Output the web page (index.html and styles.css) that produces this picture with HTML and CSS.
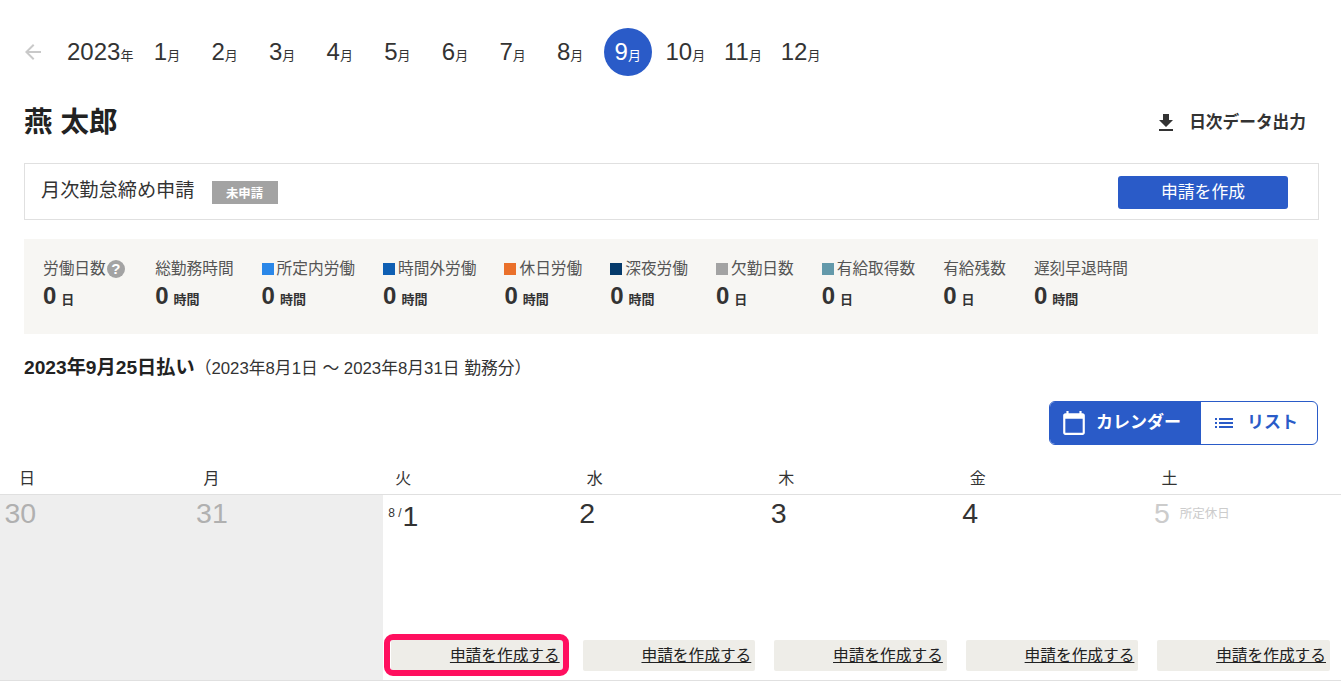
FILE: index.html
```html
<!DOCTYPE html>
<html lang="ja">
<head>
<meta charset="utf-8">
<title>勤怠</title>
<link rel="stylesheet" href="styles.css">
</head>
<body>
<div class="page">
  <nav class="months">
    <svg class="back" viewBox="0 0 24 24"><path d="M20 11H7.83l5.59-5.59L12 4l-8 8 8 8 1.41-1.41L7.83 13H20v-2z"/></svg>
    <div class="year">2023<small>年</small></div>
    <div class="month-list">
      <a class="month">1<small>月</small></a>
      <a class="month">2<small>月</small></a>
      <a class="month">3<small>月</small></a>
      <a class="month">4<small>月</small></a>
      <a class="month">5<small>月</small></a>
      <a class="month">6<small>月</small></a>
      <a class="month">7<small>月</small></a>
      <a class="month">8<small>月</small></a>
      <a class="month current">9<small>月</small></a>
      <a class="month">10<small>月</small></a>
      <a class="month">11<small>月</small></a>
      <a class="month">12<small>月</small></a>
    </div>
  </nav>

  <header class="person">
    <h1>燕 太郎</h1>
    <a class="export">
      <svg viewBox="0 0 24 24"><path d="M19 9h-4V3H9v6H5l7 7 7-7zM5 18v2h14v-2H5z"/></svg>
      <span>日次データ出力</span>
    </a>
  </header>

  <section class="closing">
    <span class="closing-title">月次勤怠締め申請</span>
    <span class="badge">未申請</span>
    <button class="primary">申請を作成</button>
  </section>

  <section class="stats">
    <div class="stat"><div class="label">労働日数<span class="help">?</span></div><div class="value">0<small>日</small></div></div>
    <div class="stat"><div class="label">総勤務時間</div><div class="value">0<small>時間</small></div></div>
    <div class="stat"><div class="label"><i class="sq c1"></i>所定内労働</div><div class="value">0<small>時間</small></div></div>
    <div class="stat"><div class="label"><i class="sq c2"></i>時間外労働</div><div class="value">0<small>時間</small></div></div>
    <div class="stat"><div class="label"><i class="sq c3"></i>休日労働</div><div class="value">0<small>時間</small></div></div>
    <div class="stat"><div class="label"><i class="sq c4"></i>深夜労働</div><div class="value">0<small>時間</small></div></div>
    <div class="stat"><div class="label"><i class="sq c5"></i>欠勤日数</div><div class="value">0<small>日</small></div></div>
    <div class="stat"><div class="label"><i class="sq c6"></i>有給取得数</div><div class="value">0<small>日</small></div></div>
    <div class="stat"><div class="label">有給残数</div><div class="value">0<small>日</small></div></div>
    <div class="stat"><div class="label">遅刻早退時間</div><div class="value">0<small>時間</small></div></div>
  </section>

  <p class="period"><b>2023年9月25日払い</b><span>（2023年8月1日 ～ 2023年8月31日 勤務分）</span></p>

  <div class="toolbar">
    <div class="toggle">
      <a class="tab active">
        <svg viewBox="0 0 24 24"><path d="M20 3h-1V1h-2v2H7V1H5v2H4c-1.1 0-2 .9-2 2v16c0 1.1.9 2 2 2h16c1.1 0 2-.9 2-2V5c0-1.1-.9-2-2-2zm0 18H4V8h16v13z"/></svg>
        <span>カレンダー</span>
      </a>
      <a class="tab">
        <svg viewBox="0 0 24 24"><path d="M3 13h2v-2H3v2zm0 4h2v-2H3v2zm0-8h2V7H3v2zm4 4h14v-2H7v2zm0 4h14v-2H7v2zM7 7v2h14V7H7z"/></svg>
        <span>リスト</span>
      </a>
    </div>
  </div>
</div>

<section class="calendar">
  <div class="dow first">日</div><div class="dow">月</div><div class="dow">火</div><div class="dow">水</div><div class="dow">木</div><div class="dow">金</div><div class="dow">土</div>

  <div class="day out"><div class="date">30</div></div>
  <div class="day out"><div class="date">31</div></div>
  <div class="day"><div class="date start"><small>8 /</small>1</div><a class="apply highlighted">申請を作成する</a></div>
  <div class="day"><div class="date">2</div><a class="apply">申請を作成する</a></div>
  <div class="day"><div class="date">3</div><a class="apply">申請を作成する</a></div>
  <div class="day"><div class="date">4</div><a class="apply">申請を作成する</a></div>
  <div class="day"><div class="date off">5<small>所定休日</small></div><a class="apply">申請を作成する</a></div>
</section>
</body>
</html>
```
FILE: styles.css
```css
* { box-sizing: border-box; }
html, body { margin: 0; padding: 0; background: #fff; }
body {
  font-family: "Liberation Sans", "Noto Sans CJK JP", sans-serif;
  color: #333;
  height: 686px;
  overflow: hidden;
}
a { color: inherit; }

.page { padding: 28px 23px 0 24px; }

.months { display: flex; align-items: center; height: 48px; }
.back { width: 24px; height: 24px; margin-left: -3px; fill: #c9c9c9; flex: none; }
.year { font-size: 24px; margin-left: 22px; width: 66px; white-space: nowrap; }
.year small, .month small { font-size: 13px; }
.month-list { display: flex; gap: 9.6px; margin-left: 10px; }
.month {
  width: 48px; height: 48px;
  border-radius: 50%;
  display: flex; align-items: center; justify-content: center;
  font-size: 24px; white-space: nowrap;
}
.month small { margin-top: 4px; }
.year small { vertical-align: 0; }
.month.current { background: #2a5bc8; color: #fff; }

.person {
  display: flex; align-items: center; justify-content: space-between;
  height: 40px; margin-top: 27px; padding-right: 12px;
}
.person h1 { margin: 0 0 2px; font-size: 28.5px; font-weight: 700; color: #222; line-height: 40px; }
.export { display: flex; align-items: center; gap: 9px; font-size: 16.7px; font-weight: 700; line-height: 24px; }
.export span { margin-top: -1px; }
.export svg { width: 24px; height: 24px; fill: #333; margin-right: 2px; }

.closing {
  display: flex; align-items: center;
  height: 57px; margin: 20px -1px 0 0;
  border: 1px solid #e0e0e0;
  padding: 0 30px 0 16px;
}
.closing-title { font-size: 19.2px; line-height: 26px; margin-top: -1px; }
.badge {
  width: 66px; height: 23px; margin-left: 17px; margin-top: 2px;
  background: #a3a3a3; color: #fff;
  font-size: 12.4px; font-weight: 700;
  display: flex; align-items: center; justify-content: center;
}
.primary {
  margin-left: auto; margin-top: 1px;
  width: 170px; height: 33px;
  background: #2a5bc8; color: #fff;
  border: 0; border-radius: 3px;
  font: inherit; font-size: 16.8px; line-height: 33px; padding: 0;
}

.stats {
  display: flex; gap: 28px;
  height: 95px; margin-top: 19px;
  padding: 20px 19px 0;
  background: #f7f6f3;
}
.stat:first-child { margin-right: 2.4px; }
.label { font-size: 15.7px; line-height: 20px; color: #555; display: flex; align-items: center; white-space: nowrap; }
.help {
  width: 18px; height: 18px; border-radius: 50%; margin-left: 1px;
  background: #a3a3a3; color: #fff;
  font-size: 15px; font-weight: 700;
  display: flex; align-items: center; justify-content: center;
}
.sq { width: 12px; height: 12px; margin-right: 3px; flex: none; }
.c1 { background: #2a87e8; }
.c2 { background: #0f5fb3; }
.c3 { background: #ea702a; }
.c4 { background: #053a6b; }
.c5 { background: #a3a3a3; }
.c6 { background: #6399aa; }
.value { font-size: 24px; font-weight: 700; line-height: 32px; margin-top: 1px; white-space: nowrap; }
.value small { font-size: 13px; margin-left: 5px; }

.period { margin: 22px 0 0; font-size: 16.8px; line-height: 24px; }
.period b { color: #222; font-size: 19.2px; }

.toolbar { display: flex; justify-content: flex-end; margin-top: 20px; }
.toggle {
  display: flex; width: 269px; height: 44px;
  border: 1px solid #2a5bc8; border-radius: 6px; overflow: hidden;
  color: #2a5bc8; font-size: 17px; font-weight: 700;
}
.tab { display: flex; align-items: center; gap: 9px; flex: 1; padding-left: 11px; }
.tab span { margin-top: -5px; }
.tab.active { flex: none; width: 151px; background: #2a5bc8; color: #fff; }
.tab svg { width: 26px; height: 26px; fill: currentColor; flex: none; }
.tab:last-child { padding-left: 11px; gap: 11px; }
.tab:last-child svg { width: 24px; height: 24px; }

.calendar {
  display: grid;
  grid-template-columns: repeat(7, 1fr);
  grid-template-rows: 50px 186px;
}
.dow {
  font-size: 16px; color: #333;
  padding: 24px 0 0 12px;
  line-height: 20px;
  border-bottom: 1px solid #e0e0e0;
}
.dow.first { padding-left: 19px; }
.day {
  display: flex; flex-direction: column; justify-content: space-between;
  border-bottom: 1px solid #e0e0e0;
  padding-bottom: 9px;
}
.day.out { background: #eee; }
.date { font-size: 28.5px; line-height: 36px; padding-left: 4.5px; color: #333; white-space: nowrap; }
.out .date { color: #b0b0b0; }
.date.start { padding-left: 5px; }
.date.start small { font-size: 12px; display: inline-block; vertical-align: 9px; margin-right: 1px; }
.date.off { color: #ccc; }
.date.off small { font-size: 12.5px; margin-left: 10px; vertical-align: 5px; color: #ccc; }
.apply {
  display: block; position: relative;
  height: 31px; margin: 0 11px 0 8px;
  background: #eeede8; border-radius: 2px;
  text-align: right; padding-right: 4px;
  font-size: 15.7px; line-height: 31px;
  color: #222; text-decoration: underline; white-space: nowrap;
}
.highlighted::after {
  content: ""; position: absolute;
  inset: -6px -5px -5px -7px;
  border: 6px solid #ff0f5f; border-radius: 9px;
}
```
